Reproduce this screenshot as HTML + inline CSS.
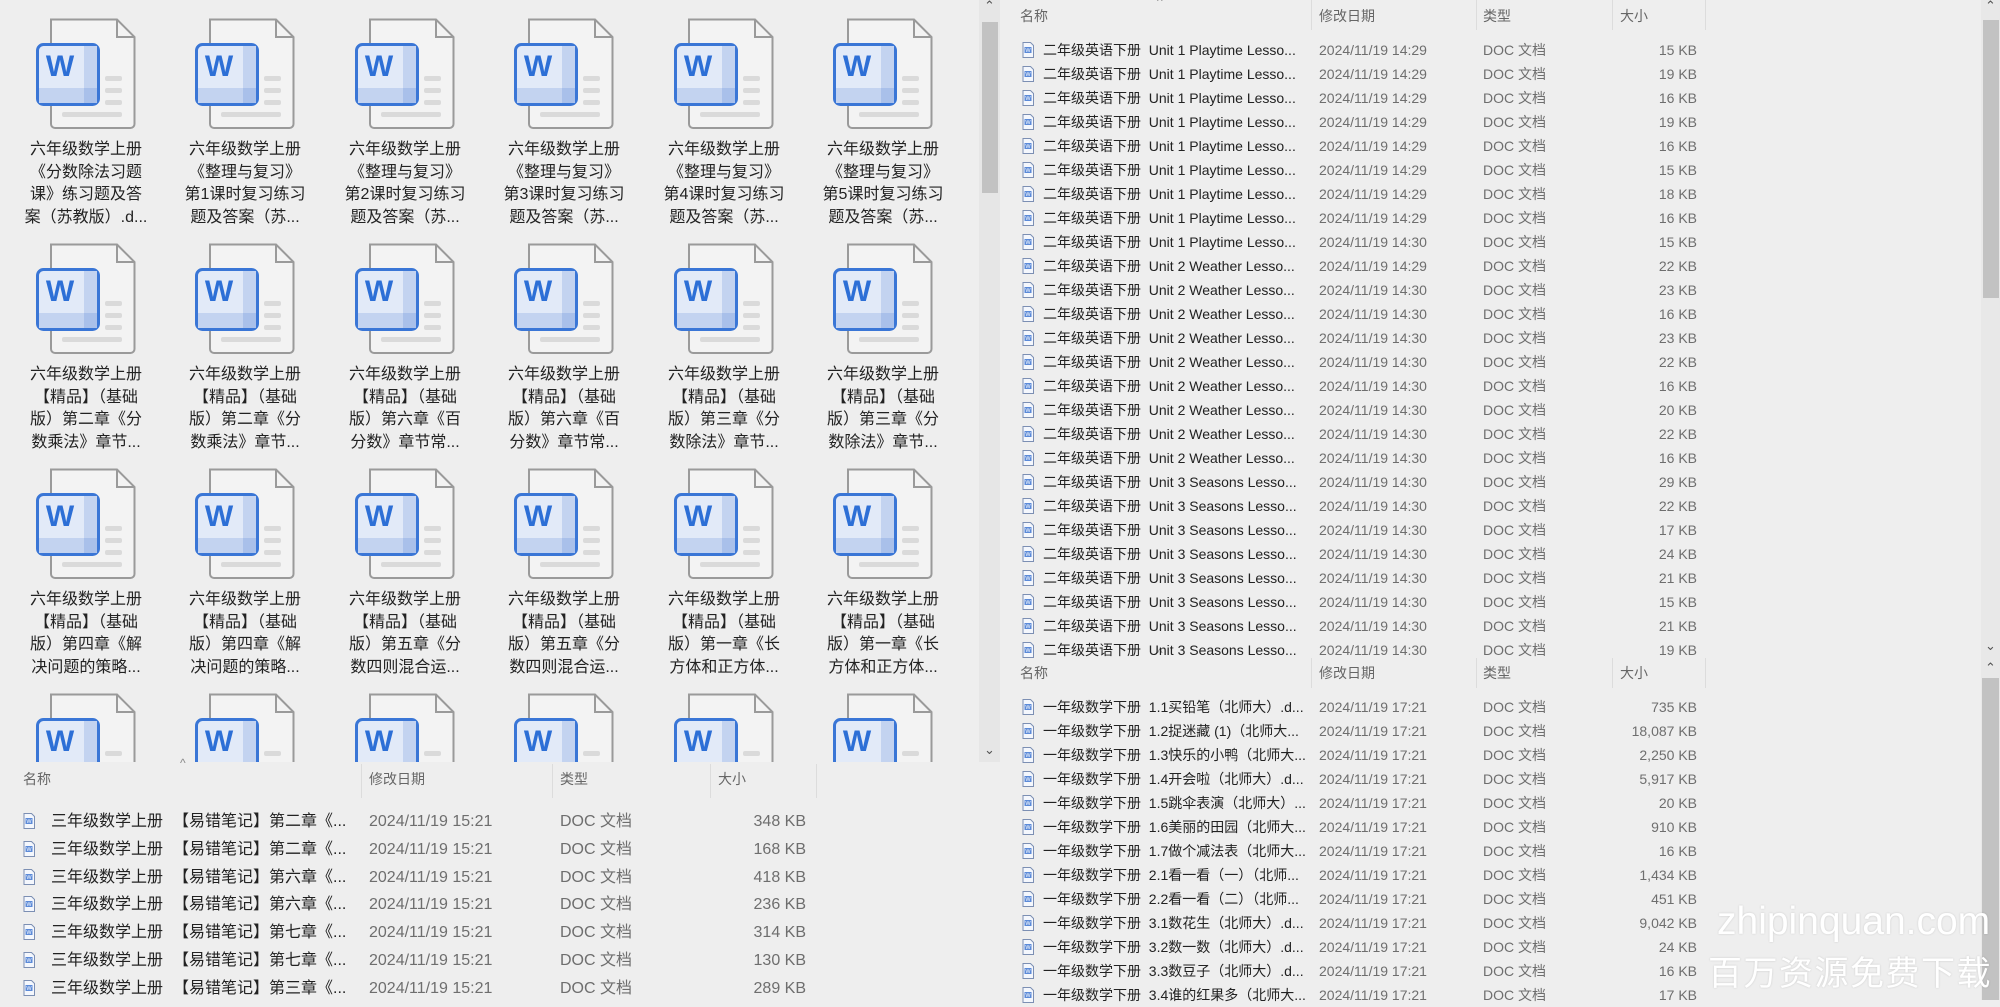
<!DOCTYPE html>
<html><head><meta charset="utf-8">
<style>
*{margin:0;padding:0;box-sizing:border-box}
body{width:2000px;height:1000px;background:#eeeeee;position:relative;overflow:hidden;font-family:"Liberation Sans","Noto Sans CJK SC",sans-serif;color:#222}
.a{position:absolute;white-space:nowrap}
.grid{position:absolute;left:0;top:0;width:979px;height:762px;overflow:hidden}
.ic{position:absolute;width:100px;height:112px}
.tx{position:absolute;width:160px;text-align:center;font-size:16px;line-height:22.5px;color:#222}
.hd{font-size:14px;color:#666}
.sep{position:absolute;width:1px;background:#dcdcdc}
.r{position:absolute;height:24px;font-size:14px;line-height:24px}
.r svg{position:absolute;top:4px}
.g{color:#6e6e6e}
.l{position:absolute;height:28px;font-size:16px;line-height:28px}
.l svg{position:absolute;top:5px}
</style></head><body>
<svg width="0" height="0" style="position:absolute">
<defs>
<symbol id="big" viewBox="0 0 100 112">
<path d="M15 1.5H81L98.5 19V106a4 4 0 0 1-4 4H19a4 4 0 0 1-4-4z" fill="#f3f3f3" stroke="#9a9a9a" stroke-width="2"/>
<path d="M81 1.5V19H98.5" fill="none" stroke="#9a9a9a" stroke-width="2"/>
<rect x="69" y="58" width="17" height="5" rx="2" fill="#dadada"/>
<rect x="69" y="70" width="17" height="5" rx="2" fill="#dadada"/>
<rect x="69" y="82" width="17" height="5" rx="2" fill="#dadada"/>
<rect x="26" y="94" width="60" height="5" rx="2" fill="#dadada"/>
<rect x="1.5" y="26.5" width="61" height="60" rx="6" fill="#e2eaf8" stroke="#3a76d6" stroke-width="3"/>
<rect x="48" y="28" width="13" height="57" fill="#c3d3f0"/>
<rect x="3" y="70" width="58" height="15" fill="#c3d3f0"/>
<rect x="48" y="70" width="13" height="15" fill="#a9c0ea"/>
<text x="24" y="58" font-family="Liberation Sans,sans-serif" font-weight="bold" font-size="30" fill="#2d6fd6" text-anchor="middle">W</text>
</symbol>
<symbol id="sm" viewBox="0 0 12 16">
<path d="M1 .5H8.5L11.5 3.5V15.5H1z" fill="#f4f7fd" stroke="#7c8fb3" stroke-width="1"/>
<rect x="2.5" y="5" width="7" height="6" fill="#5b8ad8"/>
<text x="6" y="10.2" font-size="5.5" fill="#fff" text-anchor="middle" font-family="Liberation Sans">W</text>
</symbol>
</defs></svg>

<div class="grid">
<svg class="ic" style="left:36px;top:18px"><use href="#big"/></svg>
<svg class="ic" style="left:195px;top:18px"><use href="#big"/></svg>
<svg class="ic" style="left:355px;top:18px"><use href="#big"/></svg>
<svg class="ic" style="left:514px;top:18px"><use href="#big"/></svg>
<svg class="ic" style="left:674px;top:18px"><use href="#big"/></svg>
<svg class="ic" style="left:833px;top:18px"><use href="#big"/></svg>
<svg class="ic" style="left:36px;top:243px"><use href="#big"/></svg>
<svg class="ic" style="left:195px;top:243px"><use href="#big"/></svg>
<svg class="ic" style="left:355px;top:243px"><use href="#big"/></svg>
<svg class="ic" style="left:514px;top:243px"><use href="#big"/></svg>
<svg class="ic" style="left:674px;top:243px"><use href="#big"/></svg>
<svg class="ic" style="left:833px;top:243px"><use href="#big"/></svg>
<svg class="ic" style="left:36px;top:468px"><use href="#big"/></svg>
<svg class="ic" style="left:195px;top:468px"><use href="#big"/></svg>
<svg class="ic" style="left:355px;top:468px"><use href="#big"/></svg>
<svg class="ic" style="left:514px;top:468px"><use href="#big"/></svg>
<svg class="ic" style="left:674px;top:468px"><use href="#big"/></svg>
<svg class="ic" style="left:833px;top:468px"><use href="#big"/></svg>
<svg class="ic" style="left:36px;top:693px"><use href="#big"/></svg>
<svg class="ic" style="left:195px;top:693px"><use href="#big"/></svg>
<svg class="ic" style="left:355px;top:693px"><use href="#big"/></svg>
<svg class="ic" style="left:514px;top:693px"><use href="#big"/></svg>
<svg class="ic" style="left:674px;top:693px"><use href="#big"/></svg>
<svg class="ic" style="left:833px;top:693px"><use href="#big"/></svg>

<div class="tx" style="left:6px;top:139px">六年级数学上册<br>《分数除法习题<br>课》练习题及答<br>案（苏教版）.d...</div>
<div class="tx" style="left:165px;top:139px">六年级数学上册<br>《整理与复习》<br>第1课时复习练习<br>题及答案（苏...</div>
<div class="tx" style="left:325px;top:139px">六年级数学上册<br>《整理与复习》<br>第2课时复习练习<br>题及答案（苏...</div>
<div class="tx" style="left:484px;top:139px">六年级数学上册<br>《整理与复习》<br>第3课时复习练习<br>题及答案（苏...</div>
<div class="tx" style="left:644px;top:139px">六年级数学上册<br>《整理与复习》<br>第4课时复习练习<br>题及答案（苏...</div>
<div class="tx" style="left:803px;top:139px">六年级数学上册<br>《整理与复习》<br>第5课时复习练习<br>题及答案（苏...</div>

<div class="tx" style="left:6px;top:364px">六年级数学上册<br>【精品】（基础<br>版）第二章《分<br>数乘法》章节...</div>
<div class="tx" style="left:165px;top:364px">六年级数学上册<br>【精品】（基础<br>版）第二章《分<br>数乘法》章节...</div>
<div class="tx" style="left:325px;top:364px">六年级数学上册<br>【精品】（基础<br>版）第六章《百<br>分数》章节常...</div>
<div class="tx" style="left:484px;top:364px">六年级数学上册<br>【精品】（基础<br>版）第六章《百<br>分数》章节常...</div>
<div class="tx" style="left:644px;top:364px">六年级数学上册<br>【精品】（基础<br>版）第三章《分<br>数除法》章节...</div>
<div class="tx" style="left:803px;top:364px">六年级数学上册<br>【精品】（基础<br>版）第三章《分<br>数除法》章节...</div>

<div class="tx" style="left:6px;top:589px">六年级数学上册<br>【精品】（基础<br>版）第四章《解<br>决问题的策略...</div>
<div class="tx" style="left:165px;top:589px">六年级数学上册<br>【精品】（基础<br>版）第四章《解<br>决问题的策略...</div>
<div class="tx" style="left:325px;top:589px">六年级数学上册<br>【精品】（基础<br>版）第五章《分<br>数四则混合运...</div>
<div class="tx" style="left:484px;top:589px">六年级数学上册<br>【精品】（基础<br>版）第五章《分<br>数四则混合运...</div>
<div class="tx" style="left:644px;top:589px">六年级数学上册<br>【精品】（基础<br>版）第一章《长<br>方体和正方体...</div>
<div class="tx" style="left:803px;top:589px">六年级数学上册<br>【精品】（基础<br>版）第一章《长<br>方体和正方体...</div>
</div>

<div class="a" style="left:979px;top:0;width:21px;height:762px;background:#e6e6e6"></div>
<div class="a" style="left:982px;top:22px;width:16px;height:171px;background:#c2c2c2"></div>
<div class="a" style="left:984px;top:-2px;font-size:13px;color:#555">&#8963;</div>
<div class="a" style="left:984px;top:742px;font-size:13px;color:#555">&#8964;</div>

<div class="a" style="left:180px;top:756px;font-size:12px;color:#888">^</div>
<div class="a hd" style="left:23px;top:769px">名称</div>
<div class="a hd" style="left:369px;top:769px">修改日期</div>
<div class="a hd" style="left:560px;top:769px">类型</div>
<div class="a hd" style="left:718px;top:769px">大小</div>
<div class="sep" style="left:361px;top:764px;height:34px"></div>
<div class="sep" style="left:552px;top:764px;height:34px"></div>
<div class="sep" style="left:710px;top:764px;height:34px"></div>
<div class="sep" style="left:816px;top:764px;height:34px"></div>

<div class="l" style="top:808px;left:0;width:980px"><svg width="12" height="16" style="left:23px"><use href="#sm"/></svg><span class="a" style="left:51px">三年级数学上册</span><span class="a" style="left:173px">【易错笔记】第二章《...</span><span class="a g" style="left:369px">2024/11/19 15:21</span><span class="a g" style="left:560px">DOC 文档</span><span class="a g" style="right:174px">348 KB</span></div>
<div class="l" style="top:836px;left:0;width:980px"><svg width="12" height="16" style="left:23px"><use href="#sm"/></svg><span class="a" style="left:51px">三年级数学上册</span><span class="a" style="left:173px">【易错笔记】第二章《...</span><span class="a g" style="left:369px">2024/11/19 15:21</span><span class="a g" style="left:560px">DOC 文档</span><span class="a g" style="right:174px">168 KB</span></div>
<div class="l" style="top:864px;left:0;width:980px"><svg width="12" height="16" style="left:23px"><use href="#sm"/></svg><span class="a" style="left:51px">三年级数学上册</span><span class="a" style="left:173px">【易错笔记】第六章《...</span><span class="a g" style="left:369px">2024/11/19 15:21</span><span class="a g" style="left:560px">DOC 文档</span><span class="a g" style="right:174px">418 KB</span></div>
<div class="l" style="top:891px;left:0;width:980px"><svg width="12" height="16" style="left:23px"><use href="#sm"/></svg><span class="a" style="left:51px">三年级数学上册</span><span class="a" style="left:173px">【易错笔记】第六章《...</span><span class="a g" style="left:369px">2024/11/19 15:21</span><span class="a g" style="left:560px">DOC 文档</span><span class="a g" style="right:174px">236 KB</span></div>
<div class="l" style="top:919px;left:0;width:980px"><svg width="12" height="16" style="left:23px"><use href="#sm"/></svg><span class="a" style="left:51px">三年级数学上册</span><span class="a" style="left:173px">【易错笔记】第七章《...</span><span class="a g" style="left:369px">2024/11/19 15:21</span><span class="a g" style="left:560px">DOC 文档</span><span class="a g" style="right:174px">314 KB</span></div>
<div class="l" style="top:947px;left:0;width:980px"><svg width="12" height="16" style="left:23px"><use href="#sm"/></svg><span class="a" style="left:51px">三年级数学上册</span><span class="a" style="left:173px">【易错笔记】第七章《...</span><span class="a g" style="left:369px">2024/11/19 15:21</span><span class="a g" style="left:560px">DOC 文档</span><span class="a g" style="right:174px">130 KB</span></div>
<div class="l" style="top:975px;left:0;width:980px"><svg width="12" height="16" style="left:23px"><use href="#sm"/></svg><span class="a" style="left:51px">三年级数学上册</span><span class="a" style="left:173px">【易错笔记】第三章《...</span><span class="a g" style="left:369px">2024/11/19 15:21</span><span class="a g" style="left:560px">DOC 文档</span><span class="a g" style="right:174px">289 KB</span></div>

<div class="a" style="left:1157px;top:-6px;font-size:12px;color:#888">^</div>
<div class="a hd" style="left:1020px;top:6px">名称</div>
<div class="a hd" style="left:1319px;top:6px">修改日期</div>
<div class="a hd" style="left:1483px;top:6px">类型</div>
<div class="a hd" style="left:1620px;top:6px">大小</div>
<div class="sep" style="left:1311px;top:0;height:30px"></div>
<div class="sep" style="left:1476px;top:0;height:30px"></div>
<div class="sep" style="left:1612px;top:0;height:30px"></div>
<div class="sep" style="left:1705px;top:0;height:30px"></div>

<div class="a" style="left:1157px;top:646px;font-size:12px;color:#888">^</div>
<div class="a hd" style="left:1020px;top:663px">名称</div>
<div class="a hd" style="left:1319px;top:663px">修改日期</div>
<div class="a hd" style="left:1483px;top:663px">类型</div>
<div class="a hd" style="left:1620px;top:663px">大小</div>
<div class="sep" style="left:1311px;top:658px;height:30px"></div>
<div class="sep" style="left:1476px;top:658px;height:30px"></div>
<div class="sep" style="left:1612px;top:658px;height:30px"></div>
<div class="sep" style="left:1705px;top:658px;height:30px"></div>

<div style="position:absolute;left:0;top:0;width:2000px">
<div class="r" style="top:38px;left:1000px;width:720px"><svg width="12" height="16" style="left:22px"><use href="#sm"/></svg><span class="a" style="left:43px">二年级英语下册&nbsp; Unit 1 Playtime Lesso...</span><span class="a g" style="left:319px">2024/11/19 14:29</span><span class="a g" style="left:483px">DOC 文档</span><span class="a g" style="right:23px">15 KB</span></div>
<div class="r" style="top:62px;left:1000px;width:720px"><svg width="12" height="16" style="left:22px"><use href="#sm"/></svg><span class="a" style="left:43px">二年级英语下册&nbsp; Unit 1 Playtime Lesso...</span><span class="a g" style="left:319px">2024/11/19 14:29</span><span class="a g" style="left:483px">DOC 文档</span><span class="a g" style="right:23px">19 KB</span></div>
<div class="r" style="top:86px;left:1000px;width:720px"><svg width="12" height="16" style="left:22px"><use href="#sm"/></svg><span class="a" style="left:43px">二年级英语下册&nbsp; Unit 1 Playtime Lesso...</span><span class="a g" style="left:319px">2024/11/19 14:29</span><span class="a g" style="left:483px">DOC 文档</span><span class="a g" style="right:23px">16 KB</span></div>
<div class="r" style="top:110px;left:1000px;width:720px"><svg width="12" height="16" style="left:22px"><use href="#sm"/></svg><span class="a" style="left:43px">二年级英语下册&nbsp; Unit 1 Playtime Lesso...</span><span class="a g" style="left:319px">2024/11/19 14:29</span><span class="a g" style="left:483px">DOC 文档</span><span class="a g" style="right:23px">19 KB</span></div>
<div class="r" style="top:134px;left:1000px;width:720px"><svg width="12" height="16" style="left:22px"><use href="#sm"/></svg><span class="a" style="left:43px">二年级英语下册&nbsp; Unit 1 Playtime Lesso...</span><span class="a g" style="left:319px">2024/11/19 14:29</span><span class="a g" style="left:483px">DOC 文档</span><span class="a g" style="right:23px">16 KB</span></div>
<div class="r" style="top:158px;left:1000px;width:720px"><svg width="12" height="16" style="left:22px"><use href="#sm"/></svg><span class="a" style="left:43px">二年级英语下册&nbsp; Unit 1 Playtime Lesso...</span><span class="a g" style="left:319px">2024/11/19 14:29</span><span class="a g" style="left:483px">DOC 文档</span><span class="a g" style="right:23px">15 KB</span></div>
<div class="r" style="top:182px;left:1000px;width:720px"><svg width="12" height="16" style="left:22px"><use href="#sm"/></svg><span class="a" style="left:43px">二年级英语下册&nbsp; Unit 1 Playtime Lesso...</span><span class="a g" style="left:319px">2024/11/19 14:29</span><span class="a g" style="left:483px">DOC 文档</span><span class="a g" style="right:23px">18 KB</span></div>
<div class="r" style="top:206px;left:1000px;width:720px"><svg width="12" height="16" style="left:22px"><use href="#sm"/></svg><span class="a" style="left:43px">二年级英语下册&nbsp; Unit 1 Playtime Lesso...</span><span class="a g" style="left:319px">2024/11/19 14:29</span><span class="a g" style="left:483px">DOC 文档</span><span class="a g" style="right:23px">16 KB</span></div>
<div class="r" style="top:230px;left:1000px;width:720px"><svg width="12" height="16" style="left:22px"><use href="#sm"/></svg><span class="a" style="left:43px">二年级英语下册&nbsp; Unit 1 Playtime Lesso...</span><span class="a g" style="left:319px">2024/11/19 14:30</span><span class="a g" style="left:483px">DOC 文档</span><span class="a g" style="right:23px">15 KB</span></div>
<div class="r" style="top:254px;left:1000px;width:720px"><svg width="12" height="16" style="left:22px"><use href="#sm"/></svg><span class="a" style="left:43px">二年级英语下册&nbsp; Unit 2 Weather Lesso...</span><span class="a g" style="left:319px">2024/11/19 14:29</span><span class="a g" style="left:483px">DOC 文档</span><span class="a g" style="right:23px">22 KB</span></div>
<div class="r" style="top:278px;left:1000px;width:720px"><svg width="12" height="16" style="left:22px"><use href="#sm"/></svg><span class="a" style="left:43px">二年级英语下册&nbsp; Unit 2 Weather Lesso...</span><span class="a g" style="left:319px">2024/11/19 14:30</span><span class="a g" style="left:483px">DOC 文档</span><span class="a g" style="right:23px">23 KB</span></div>
<div class="r" style="top:302px;left:1000px;width:720px"><svg width="12" height="16" style="left:22px"><use href="#sm"/></svg><span class="a" style="left:43px">二年级英语下册&nbsp; Unit 2 Weather Lesso...</span><span class="a g" style="left:319px">2024/11/19 14:30</span><span class="a g" style="left:483px">DOC 文档</span><span class="a g" style="right:23px">16 KB</span></div>
<div class="r" style="top:326px;left:1000px;width:720px"><svg width="12" height="16" style="left:22px"><use href="#sm"/></svg><span class="a" style="left:43px">二年级英语下册&nbsp; Unit 2 Weather Lesso...</span><span class="a g" style="left:319px">2024/11/19 14:30</span><span class="a g" style="left:483px">DOC 文档</span><span class="a g" style="right:23px">23 KB</span></div>
<div class="r" style="top:350px;left:1000px;width:720px"><svg width="12" height="16" style="left:22px"><use href="#sm"/></svg><span class="a" style="left:43px">二年级英语下册&nbsp; Unit 2 Weather Lesso...</span><span class="a g" style="left:319px">2024/11/19 14:30</span><span class="a g" style="left:483px">DOC 文档</span><span class="a g" style="right:23px">22 KB</span></div>
<div class="r" style="top:374px;left:1000px;width:720px"><svg width="12" height="16" style="left:22px"><use href="#sm"/></svg><span class="a" style="left:43px">二年级英语下册&nbsp; Unit 2 Weather Lesso...</span><span class="a g" style="left:319px">2024/11/19 14:30</span><span class="a g" style="left:483px">DOC 文档</span><span class="a g" style="right:23px">16 KB</span></div>
<div class="r" style="top:398px;left:1000px;width:720px"><svg width="12" height="16" style="left:22px"><use href="#sm"/></svg><span class="a" style="left:43px">二年级英语下册&nbsp; Unit 2 Weather Lesso...</span><span class="a g" style="left:319px">2024/11/19 14:30</span><span class="a g" style="left:483px">DOC 文档</span><span class="a g" style="right:23px">20 KB</span></div>
<div class="r" style="top:422px;left:1000px;width:720px"><svg width="12" height="16" style="left:22px"><use href="#sm"/></svg><span class="a" style="left:43px">二年级英语下册&nbsp; Unit 2 Weather Lesso...</span><span class="a g" style="left:319px">2024/11/19 14:30</span><span class="a g" style="left:483px">DOC 文档</span><span class="a g" style="right:23px">22 KB</span></div>
<div class="r" style="top:446px;left:1000px;width:720px"><svg width="12" height="16" style="left:22px"><use href="#sm"/></svg><span class="a" style="left:43px">二年级英语下册&nbsp; Unit 2 Weather Lesso...</span><span class="a g" style="left:319px">2024/11/19 14:30</span><span class="a g" style="left:483px">DOC 文档</span><span class="a g" style="right:23px">16 KB</span></div>
<div class="r" style="top:470px;left:1000px;width:720px"><svg width="12" height="16" style="left:22px"><use href="#sm"/></svg><span class="a" style="left:43px">二年级英语下册&nbsp; Unit 3 Seasons Lesso...</span><span class="a g" style="left:319px">2024/11/19 14:30</span><span class="a g" style="left:483px">DOC 文档</span><span class="a g" style="right:23px">29 KB</span></div>
<div class="r" style="top:494px;left:1000px;width:720px"><svg width="12" height="16" style="left:22px"><use href="#sm"/></svg><span class="a" style="left:43px">二年级英语下册&nbsp; Unit 3 Seasons Lesso...</span><span class="a g" style="left:319px">2024/11/19 14:30</span><span class="a g" style="left:483px">DOC 文档</span><span class="a g" style="right:23px">22 KB</span></div>
<div class="r" style="top:518px;left:1000px;width:720px"><svg width="12" height="16" style="left:22px"><use href="#sm"/></svg><span class="a" style="left:43px">二年级英语下册&nbsp; Unit 3 Seasons Lesso...</span><span class="a g" style="left:319px">2024/11/19 14:30</span><span class="a g" style="left:483px">DOC 文档</span><span class="a g" style="right:23px">17 KB</span></div>
<div class="r" style="top:542px;left:1000px;width:720px"><svg width="12" height="16" style="left:22px"><use href="#sm"/></svg><span class="a" style="left:43px">二年级英语下册&nbsp; Unit 3 Seasons Lesso...</span><span class="a g" style="left:319px">2024/11/19 14:30</span><span class="a g" style="left:483px">DOC 文档</span><span class="a g" style="right:23px">24 KB</span></div>
<div class="r" style="top:566px;left:1000px;width:720px"><svg width="12" height="16" style="left:22px"><use href="#sm"/></svg><span class="a" style="left:43px">二年级英语下册&nbsp; Unit 3 Seasons Lesso...</span><span class="a g" style="left:319px">2024/11/19 14:30</span><span class="a g" style="left:483px">DOC 文档</span><span class="a g" style="right:23px">21 KB</span></div>
<div class="r" style="top:590px;left:1000px;width:720px"><svg width="12" height="16" style="left:22px"><use href="#sm"/></svg><span class="a" style="left:43px">二年级英语下册&nbsp; Unit 3 Seasons Lesso...</span><span class="a g" style="left:319px">2024/11/19 14:30</span><span class="a g" style="left:483px">DOC 文档</span><span class="a g" style="right:23px">15 KB</span></div>
<div class="r" style="top:614px;left:1000px;width:720px"><svg width="12" height="16" style="left:22px"><use href="#sm"/></svg><span class="a" style="left:43px">二年级英语下册&nbsp; Unit 3 Seasons Lesso...</span><span class="a g" style="left:319px">2024/11/19 14:30</span><span class="a g" style="left:483px">DOC 文档</span><span class="a g" style="right:23px">21 KB</span></div>
<div class="r" style="top:638px;left:1000px;width:720px"><svg width="12" height="16" style="left:22px"><use href="#sm"/></svg><span class="a" style="left:43px">二年级英语下册&nbsp; Unit 3 Seasons Lesso...</span><span class="a g" style="left:319px">2024/11/19 14:30</span><span class="a g" style="left:483px">DOC 文档</span><span class="a g" style="right:23px">19 KB</span></div>

<div class="r" style="top:695px;left:1000px;width:720px"><svg width="12" height="16" style="left:22px"><use href="#sm"/></svg><span class="a" style="left:43px">一年级数学下册&nbsp; 1.1买铅笔（北师大）.d...</span><span class="a g" style="left:319px">2024/11/19 17:21</span><span class="a g" style="left:483px">DOC 文档</span><span class="a g" style="right:23px">735 KB</span></div>
<div class="r" style="top:719px;left:1000px;width:720px"><svg width="12" height="16" style="left:22px"><use href="#sm"/></svg><span class="a" style="left:43px">一年级数学下册&nbsp; 1.2捉迷藏 (1)（北师大...</span><span class="a g" style="left:319px">2024/11/19 17:21</span><span class="a g" style="left:483px">DOC 文档</span><span class="a g" style="right:23px">18,087 KB</span></div>
<div class="r" style="top:743px;left:1000px;width:720px"><svg width="12" height="16" style="left:22px"><use href="#sm"/></svg><span class="a" style="left:43px">一年级数学下册&nbsp; 1.3快乐的小鸭（北师大...</span><span class="a g" style="left:319px">2024/11/19 17:21</span><span class="a g" style="left:483px">DOC 文档</span><span class="a g" style="right:23px">2,250 KB</span></div>
<div class="r" style="top:767px;left:1000px;width:720px"><svg width="12" height="16" style="left:22px"><use href="#sm"/></svg><span class="a" style="left:43px">一年级数学下册&nbsp; 1.4开会啦（北师大）.d...</span><span class="a g" style="left:319px">2024/11/19 17:21</span><span class="a g" style="left:483px">DOC 文档</span><span class="a g" style="right:23px">5,917 KB</span></div>
<div class="r" style="top:791px;left:1000px;width:720px"><svg width="12" height="16" style="left:22px"><use href="#sm"/></svg><span class="a" style="left:43px">一年级数学下册&nbsp; 1.5跳伞表演（北师大）...</span><span class="a g" style="left:319px">2024/11/19 17:21</span><span class="a g" style="left:483px">DOC 文档</span><span class="a g" style="right:23px">20 KB</span></div>
<div class="r" style="top:815px;left:1000px;width:720px"><svg width="12" height="16" style="left:22px"><use href="#sm"/></svg><span class="a" style="left:43px">一年级数学下册&nbsp; 1.6美丽的田园（北师大...</span><span class="a g" style="left:319px">2024/11/19 17:21</span><span class="a g" style="left:483px">DOC 文档</span><span class="a g" style="right:23px">910 KB</span></div>
<div class="r" style="top:839px;left:1000px;width:720px"><svg width="12" height="16" style="left:22px"><use href="#sm"/></svg><span class="a" style="left:43px">一年级数学下册&nbsp; 1.7做个减法表（北师大...</span><span class="a g" style="left:319px">2024/11/19 17:21</span><span class="a g" style="left:483px">DOC 文档</span><span class="a g" style="right:23px">16 KB</span></div>
<div class="r" style="top:863px;left:1000px;width:720px"><svg width="12" height="16" style="left:22px"><use href="#sm"/></svg><span class="a" style="left:43px">一年级数学下册&nbsp; 2.1看一看（一）（北师...</span><span class="a g" style="left:319px">2024/11/19 17:21</span><span class="a g" style="left:483px">DOC 文档</span><span class="a g" style="right:23px">1,434 KB</span></div>
<div class="r" style="top:887px;left:1000px;width:720px"><svg width="12" height="16" style="left:22px"><use href="#sm"/></svg><span class="a" style="left:43px">一年级数学下册&nbsp; 2.2看一看（二）（北师...</span><span class="a g" style="left:319px">2024/11/19 17:21</span><span class="a g" style="left:483px">DOC 文档</span><span class="a g" style="right:23px">451 KB</span></div>
<div class="r" style="top:911px;left:1000px;width:720px"><svg width="12" height="16" style="left:22px"><use href="#sm"/></svg><span class="a" style="left:43px">一年级数学下册&nbsp; 3.1数花生（北师大）.d...</span><span class="a g" style="left:319px">2024/11/19 17:21</span><span class="a g" style="left:483px">DOC 文档</span><span class="a g" style="right:23px">9,042 KB</span></div>
<div class="r" style="top:935px;left:1000px;width:720px"><svg width="12" height="16" style="left:22px"><use href="#sm"/></svg><span class="a" style="left:43px">一年级数学下册&nbsp; 3.2数一数（北师大）.d...</span><span class="a g" style="left:319px">2024/11/19 17:21</span><span class="a g" style="left:483px">DOC 文档</span><span class="a g" style="right:23px">24 KB</span></div>
<div class="r" style="top:959px;left:1000px;width:720px"><svg width="12" height="16" style="left:22px"><use href="#sm"/></svg><span class="a" style="left:43px">一年级数学下册&nbsp; 3.3数豆子（北师大）.d...</span><span class="a g" style="left:319px">2024/11/19 17:21</span><span class="a g" style="left:483px">DOC 文档</span><span class="a g" style="right:23px">16 KB</span></div>
<div class="r" style="top:983px;left:1000px;width:720px"><svg width="12" height="16" style="left:22px"><use href="#sm"/></svg><span class="a" style="left:43px">一年级数学下册&nbsp; 3.4谁的红果多（北师大...</span><span class="a g" style="left:319px">2024/11/19 17:21</span><span class="a g" style="left:483px">DOC 文档</span><span class="a g" style="right:23px">17 KB</span></div>
</div>

<div class="a" style="left:1981px;top:0;width:19px;height:660px;background:#e8e8e8"></div>
<div class="a" style="left:1983px;top:20px;width:16px;height:278px;background:#c2c2c2"></div>
<div class="a" style="left:1985px;top:-2px;font-size:13px;color:#555">&#8963;</div>
<div class="a" style="left:1985px;top:638px;font-size:13px;color:#555">&#8964;</div>
<div class="a" style="left:1981px;top:660px;width:19px;height:340px;background:#e8e8e8"></div>
<div class="a" style="left:1985px;top:660px;font-size:13px;color:#555">&#8963;</div>
<div class="a" style="left:1982px;top:678px;width:17px;height:322px;background:#c2c2c2"></div>

<div class="a" style="left:1717px;top:900px;font-size:39px;color:#fff;text-shadow:0 0 2px rgba(0,0,0,.15)">zhipinquan.com</div>
<div class="a" style="left:1708px;top:950px;font-size:34px;line-height:42px;color:#fff;letter-spacing:1.5px;text-shadow:0 0 2px rgba(0,0,0,.15);font-family:'Noto Sans CJK SC',sans-serif">百万资源免费下载</div>
</body></html>
